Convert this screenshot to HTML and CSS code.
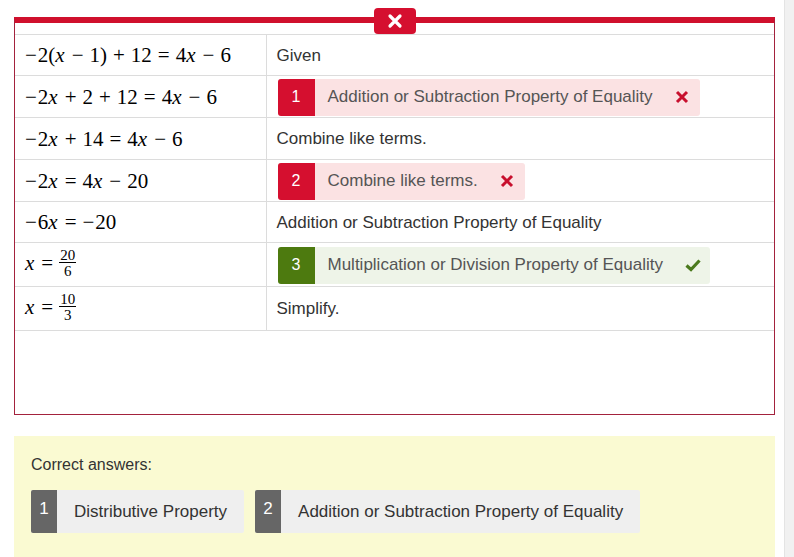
FILE: index.html
```html
<!DOCTYPE html>
<html lang="en">
<head>
  <meta charset="UTF-8">
  <title>Proof steps</title>
  <link rel="stylesheet" href="styles.css">
</head>
<body>
  <div class="page">
    <div class="proof">
      <button class="close" aria-label="Close">
        <svg width="16" height="16" viewBox="0 0 16 16"><path d="M3 3 L13 13 M13 3 L3 13" stroke="#fff" stroke-width="3.2" stroke-linecap="round"/></svg>
      </button>
      <table class="steps">
        <colgroup>
          <col class="col-math">
          <col>
        </colgroup>
        <tr class="r41">
          <td class="math"><span class="op-l">−</span>2(<i>x</i><span class="op">−</span>1)<span class="op">+</span>12<span class="rel">=</span>4<i>x</i><span class="op">−</span>6</td>
          <td>Given</td>
        </tr>
        <tr>
          <td class="math"><span class="op-l">−</span>2<i>x</i><span class="op">+</span>2<span class="op">+</span>12<span class="rel">=</span>4<i>x</i><span class="op">−</span>6</td>
          <td class="slot">
            <div class="answer wrong">
              <span class="num">1</span>
              <span class="label">Addition or Subtraction Property of Equality</span>
              <svg class="mark" width="14" height="14" viewBox="0 0 14 14"><path d="M2 2 L12 12 M12 2 L2 12" stroke="#c8102e" stroke-width="3"/></svg>
            </div>
          </td>
        </tr>
        <tr>
          <td class="math"><span class="op-l">−</span>2<i>x</i><span class="op">+</span>14<span class="rel">=</span>4<i>x</i><span class="op">−</span>6</td>
          <td>Combine like terms.</td>
        </tr>
        <tr>
          <td class="math"><span class="op-l">−</span>2<i>x</i><span class="rel">=</span>4<i>x</i><span class="op">−</span>20</td>
          <td class="slot">
            <div class="answer wrong">
              <span class="num">2</span>
              <span class="label">Combine like terms.</span>
              <svg class="mark" width="14" height="14" viewBox="0 0 14 14"><path d="M2 2 L12 12 M12 2 L2 12" stroke="#c8102e" stroke-width="3"/></svg>
            </div>
          </td>
        </tr>
        <tr class="r41">
          <td class="math"><span class="op-l">−</span>6<i>x</i><span class="rel">=</span><span class="op-l">−</span>20</td>
          <td>Addition or Subtraction Property of Equality</td>
        </tr>
        <tr class="tall">
          <td class="math"><i>x</i><span class="rel">=</span><span class="frac"><span>20</span><span>6</span></span></td>
          <td class="slot">
            <div class="answer right">
              <span class="num">3</span>
              <span class="label">Multiplication or Division Property of Equality</span>
              <svg class="mark" width="16" height="14" viewBox="0 0 16 14"><path d="M1.5 7.5 L6 11.5 L14.5 2.5" stroke="#4b7a1d" stroke-width="3.2" fill="none"/></svg>
            </div>
          </td>
        </tr>
        <tr class="tall">
          <td class="math"><i>x</i><span class="rel">=</span><span class="frac"><span>10</span><span>3</span></span></td>
          <td>Simplify.</td>
        </tr>
      </table>
    </div>

    <div class="correct">
      <p>Correct answers:</p>
      <div class="chips">
        <div class="chip"><span class="num">1</span><span class="label">Distributive Property</span></div>
        <div class="chip"><span class="num">2</span><span class="label">Addition or Subtraction Property of Equality</span></div>
      </div>
    </div>
  </div>
  <div class="scrollbar"></div>
</body>
</html>
```

FILE: styles.css
```css
body {
  margin: 0;
  height: 557px;
  overflow: hidden;
  display: flex;
  font-family: "Liberation Sans", Arial, sans-serif;
  font-size: 17px;
  color: #333;
  background: #fff;
}

.page {
  flex: 1;
  padding: 17px 9px 0 14px;
}

.scrollbar {
  width: 9px;
  background: #f1f1f1;
  border-left: 1px solid #e4e4e4;
}

.proof {
  position: relative;
  height: 380px;
  border: 1px solid #a3223d;
  border-top: 6px solid #d0102d;
  padding-top: 11px;
}

.close {
  position: absolute;
  top: -15px;
  left: 50%;
  margin-left: -21px;
  width: 42px;
  height: 26px;
  border: none;
  border-radius: 4px;
  background: #d50f2f;
  display: flex;
  align-items: center;
  justify-content: center;
  padding: 0;
}

.steps {
  width: 100%;
  border-collapse: collapse;
  table-layout: fixed;
}

.col-math {
  width: 251px;
}

.steps td {
  border-top: 1px solid #dcdcdc;
  border-bottom: 1px solid #dcdcdc;
  height: 42px;
  padding: 1px 10px 0;
  vertical-align: middle;
  box-sizing: border-box;
}

.steps tr.r41 td {
  height: 41px;
}

.steps tr.tall td {
  height: 44px;
}

.steps td:first-child {
  border-right: 1px solid #dcdcdc;
}

.steps td.slot {
  padding: 1px 10px 0 11px;
}

.math {
  font-family: "Liberation Serif", "DejaVu Serif", serif;
  font-size: 21px;
  color: #000;
  white-space: nowrap;
}

.math i {
  padding-right: 1px;
}

.op {
  margin: 0 6px;
}

.op-l {
  margin-right: 1px;
}

.rel {
  margin: 0 6px;
}

.frac {
  display: inline-flex;
  flex-direction: column;
  align-items: center;
  vertical-align: middle;
  font-size: 15px;
  line-height: 12px;
  position: relative;
  top: -2px;
}

.frac span:first-child {
  border-bottom: 1px solid #000;
  padding: 0 1px 1px;
}

.frac span:last-child {
  padding-top: 2px;
}

.answer {
  display: inline-flex;
  align-items: center;
  height: 37px;
  border-radius: 3px;
  overflow: hidden;
  color: #555;
  vertical-align: middle;
}

.answer .num {
  width: 37px;
  align-self: stretch;
  display: flex;
  align-items: center;
  justify-content: center;
  color: #fff;
  font-size: 16px;
}

.answer .label {
  padding: 0 22px 0 13px;
}

.answer .mark {
  margin-right: 11px;
}

.wrong {
  background: #fbe2e3;
}

.wrong .num {
  background: #d50f2f;
}

.right {
  background: #eef4e8;
}

.right .mark {
  margin-right: 9px;
}

.right .num {
  background: #4d7a0f;
}

.correct {
  margin-top: 21px;
  background: #fafad2;
  padding: 20px 17px 24px;
}

.correct p {
  margin: 0 0 16px;
  color: #333;
  font-size: 16px;
}

.chips {
  display: flex;
  gap: 11px;
}

.chip {
  display: flex;
  height: 43px;
  background: #efefef;
  border-radius: 2px;
  overflow: hidden;
}

.chip .num {
  width: 26px;
  background: #666;
  color: #fff;
  text-align: center;
  padding-top: 9px;
  box-sizing: border-box;
  font-size: 17px;
}

.chip .label {
  padding: 0 17px 0 17px;
  line-height: 43px;
  color: #333;
}
```
